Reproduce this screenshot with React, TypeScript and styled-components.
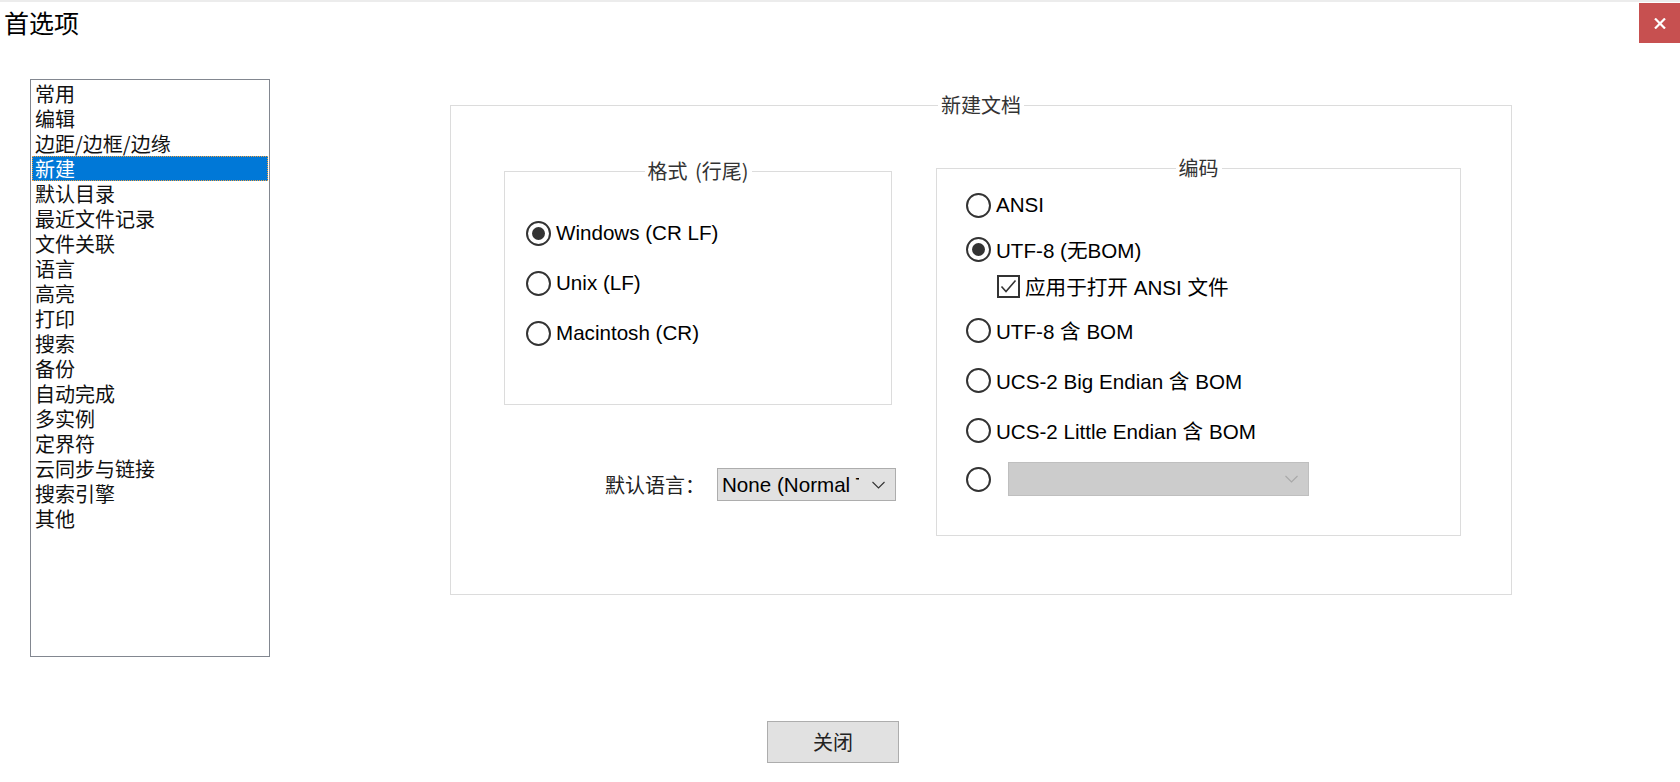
import React from "react";
import styled, { createGlobalStyle } from "styled-components";

const GlobalStyle = createGlobalStyle`
  html, body { margin: 0; padding: 0; background: #fff; }
  body { font-family: "Liberation Sans", "Noto Sans CJK SC", sans-serif; color: #000; }
  * { box-sizing: border-box; }
`;

const Root = styled.div`
  width: 1680px;
  height: 782px;
  overflow: hidden;
  display: flex;
  flex-direction: column;
  background: #fff;
`;

const TopStrip = styled.div`
  height: 2px;
  flex: none;
  background: #ececec;
`;

const Header = styled.header`
  height: 41px;
  flex: none;
  display: flex;
  justify-content: space-between;
  align-items: flex-start;
`;

const Title = styled.h1`
  margin: 0;
  padding-left: 4px;
  font: 400 25px/41px "Noto Sans CJK SC", sans-serif;
  color: #000;
`;

const CloseButton = styled.button`
  margin-top: 1px;
  width: 41px;
  height: 40px;
  border: none;
  padding: 0;
  background: #c75050;
  display: flex;
  align-items: center;
  justify-content: center;
`;

const Body = styled.div`
  flex: none;
  display: flex;
  align-items: flex-start;
  padding-left: 30px;
  margin-top: 36px;
`;

const ListBox = styled.ul`
  flex: none;
  list-style: none;
  margin: 0;
  padding: 1px;
  width: 240px;
  height: 578px;
  border: 1px solid #828790;
  font: 20px/25px "Noto Sans CJK SC", sans-serif;
`;

const ListItem = styled.li<{ $selected?: boolean }>`
  height: 25px;
  padding-left: 3px;
  white-space: nowrap;
  color: ${(p) => (p.$selected ? "#fff" : "#111")};
  background: ${(p) => (p.$selected ? "#0078d7" : "transparent")};
  outline: ${(p) => (p.$selected ? "1px dotted #f0a040" : "none")};
  outline-offset: -1px;
`;

const Main = styled.div`
  flex: none;
  margin-left: 180px;
  margin-top: 26px;
`;

const Group = styled.section<{ $w: number; $h: number }>`
  flex: none;
  width: ${(p) => p.$w}px;
  height: ${(p) => p.$h}px;
  border: 1px solid #dcdcdc;
  display: flex;
  flex-direction: column;
`;

const GroupTitle = styled.div`
  align-self: center;
  margin-top: -11px;
  padding: 0 3px;
  background: #fff;
  font: 20px/20px "Noto Sans CJK SC", sans-serif;
  color: #333;
  white-space: nowrap;
  word-spacing: 3px;
`;

const GroupRow = styled.div`
  display: flex;
  align-items: flex-start;
  gap: 40px;
  padding-left: 53px;
  margin-top: 53px;
`;

const LeftColumn = styled.div`
  width: 392px;
  margin-top: 3px;
  display: flex;
  flex-direction: column;
`;

const Option = styled.label<{ $mt: number; $pl: number; $h?: number }>`
  display: flex;
  align-items: center;
  gap: 5px;
  height: ${(p) => p.$h ?? 30}px;
  margin-top: ${(p) => p.$mt}px;
  padding-left: ${(p) => p.$pl}px;
  font-size: 20.6px;
  white-space: nowrap;
  color: #000;
`;

const RadioCircle = styled.span<{ $checked?: boolean }>`
  flex: none;
  width: 25px;
  height: 25px;
  border: 2px solid #333;
  border-radius: 50%;
  display: flex;
  align-items: center;
  justify-content: center;
  &::after {
    content: "";
    width: 13px;
    height: 13px;
    border-radius: 50%;
    background: #333;
    display: ${(p) => (p.$checked ? "block" : "none")};
  }
`;

const CheckBox = styled.span`
  flex: none;
  width: 23px;
  height: 23px;
  border: 2px solid #333;
  display: flex;
  align-items: center;
  justify-content: center;
`;

const LangRow = styled.div`
  display: flex;
  align-items: center;
  justify-content: flex-end;
  gap: 12px;
  margin-top: 63px;
`;

const LangLabel = styled.span`
  font: 20px/20px "Noto Sans CJK SC", sans-serif;
  color: #222;
`;

const Select = styled.div<{ $w: number; $h: number; $disabled?: boolean; $ml?: number }>`
  flex: none;
  width: ${(p) => p.$w}px;
  height: ${(p) => p.$h}px;
  margin-left: ${(p) => p.$ml ?? 0}px;
  border: 1px solid ${(p) => (p.$disabled ? "#bfbfbf" : "#adadad")};
  background: ${(p) => (p.$disabled ? "#cccccc" : "#e1e1e1")};
  display: flex;
  align-items: center;
  padding: 0 10px 0 4px;
  font-size: 20.6px;
  color: #000;
`;

const SelectText = styled.span`
  flex: none;
  width: 137px;
  overflow: hidden;
  white-space: nowrap;
`;

const Chevron = styled.svg`
  flex: none;
  margin-left: auto;
`;

const Footer = styled.div`
  flex: none;
  padding-left: 767px;
  margin-top: 64px;
`;

const PushButton = styled.button`
  width: 132px;
  height: 42px;
  border: 1px solid #adadad;
  background: #e1e1e1;
  padding: 0;
  font: 20px/20px "Noto Sans CJK SC", sans-serif;
  color: #222;
`;

const categories = [
  "常用",
  "编辑",
  "边距/边框/边缘",
  "新建",
  "默认目录",
  "最近文件记录",
  "文件关联",
  "语言",
  "高亮",
  "打印",
  "搜索",
  "备份",
  "自动完成",
  "多实例",
  "定界符",
  "云同步与链接",
  "搜索引擎",
  "其他",
];

const ChevronIcon = ({ color }: { color: string }) => (
  <Chevron width="13" height="8" viewBox="0 0 13 8">
    <polyline points="0.5,1 6.5,7 12.5,1" fill="none" stroke={color} strokeWidth="1.1" />
  </Chevron>
);

export default function App() {
  return (
    <Root>
      <GlobalStyle />
      <TopStrip />
      <Header>
        <Title>首选项</Title>
        <CloseButton aria-label="关闭">
          <svg width="12" height="11" viewBox="0 0 12 11">
            <path d="M1 0.5 L11 10.5 M11 0.5 L1 10.5" stroke="#fff" strokeWidth="2.2" />
          </svg>
        </CloseButton>
      </Header>
      <Body>
        <ListBox>
          {categories.map((c) => (
            <ListItem key={c} $selected={c === "新建"}>
              {c}
            </ListItem>
          ))}
        </ListBox>
        <Main>
          <Group $w={1062} $h={490}>
            <GroupTitle>新建文档</GroupTitle>
            <GroupRow>
              <LeftColumn>
                <Group $w={388} $h={234}>
                  <GroupTitle>格式 (行尾)</GroupTitle>
                  <Option $mt={37} $pl={21}>
                    <RadioCircle $checked />
                    Windows (CR LF)
                  </Option>
                  <Option $mt={20} $pl={21}>
                    <RadioCircle />
                    Unix (LF)
                  </Option>
                  <Option $mt={20} $pl={21}>
                    <RadioCircle />
                    Macintosh (CR)
                  </Option>
                </Group>
                <LangRow>
                  <LangLabel>默认语言：</LangLabel>
                  <Select $w={179} $h={33}>
                    <SelectText>None (Normal Text)</SelectText>
                    <ChevronIcon color="#333" />
                  </Select>
                </LangRow>
              </LeftColumn>
              <Group $w={525} $h={368}>
                <GroupTitle>编码</GroupTitle>
                <Option $mt={12} $pl={29}>
                  <RadioCircle />
                  ANSI
                </Option>
                <Option $mt={14} $pl={29}>
                  <RadioCircle $checked />
                  UTF-8 (无BOM)
                </Option>
                <Option $mt={7} $pl={60}>
                  <CheckBox>
                    <svg width="17" height="15" viewBox="0 0 17 15">
                      <polyline points="1.5,7.5 6,12.5 15.5,1.5" fill="none" stroke="#333" strokeWidth="1.6" />
                    </svg>
                  </CheckBox>
                  应用于打开 ANSI 文件
                </Option>
                <Option $mt={14} $pl={29}>
                  <RadioCircle />
                  UTF-8 含 BOM
                </Option>
                <Option $mt={20} $pl={29}>
                  <RadioCircle />
                  UCS-2 Big Endian 含 BOM
                </Option>
                <Option $mt={20} $pl={29}>
                  <RadioCircle />
                  UCS-2 Little Endian 含 BOM
                </Option>
                <Option $mt={17} $pl={29} $h={34}>
                  <RadioCircle />
                  <Select $w={301} $h={34} $disabled $ml={12}>
                    <ChevronIcon color="#a8a8a8" />
                  </Select>
                </Option>
              </Group>
            </GroupRow>
          </Group>
        </Main>
      </Body>
      <Footer>
        <PushButton>关闭</PushButton>
      </Footer>
    </Root>
  );
}
